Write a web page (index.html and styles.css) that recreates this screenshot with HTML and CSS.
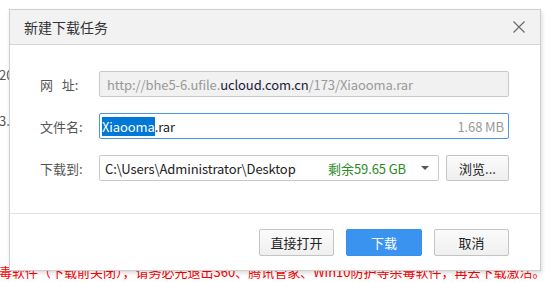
FILE: index.html
```html
<!DOCTYPE html>
<html lang="zh-CN">
<head>
  <meta charset="UTF-8">
  <title>新建下载任务</title>
  <link rel="stylesheet" href="styles.css">
</head>
<body>
  <div class="page">
    <p class="line line-a">2020年3月最新版本下载</p>
    <p class="line line-b">3.0.1 版本更新说明</p>
    <p class="line warn">毒软件（下载前关闭），请务必先退出360、腾讯管家、Win10防护等杀毒软件，再去下载激活。</p>
  </div>

  <div class="dialog">
    <div class="dialog-head">
      <span class="dialog-title">新建下载任务</span>
      <svg class="close" width="12" height="12" viewBox="0 0 12 12">
        <path d="M0.5 0.5 L11.5 11.5 M11.5 0.5 L0.5 11.5" stroke="#666" stroke-width="1.1" fill="none"/>
      </svg>
    </div>

    <div class="dialog-body">
      <div class="row">
        <label class="label">网&nbsp;&nbsp;&nbsp;址:</label>
        <div class="field field-disabled">
          <span class="dim">http://bhe5-6.ufile.</span><span class="host">ucloud.com.cn</span><span class="dim">/173/Xiaooma.rar</span>
        </div>
      </div>
      <div class="row">
        <label class="label">文件名:</label>
        <div class="field field-active">
          <span class="sel">Xiaooma</span><span>.rar</span>
          <span class="size">1.68 MB</span>
        </div>
      </div>
      <div class="row">
        <label class="label">下载到:</label>
        <div class="field field-select">
          <span>C:\Users\Administrator\Desktop</span>
          <span class="free">剩余59.65 GB</span>
          <span class="caret"></span>
        </div>
        <button class="btn btn-browse">浏览...</button>
      </div>
    </div>

    <div class="dialog-foot">
      <button class="btn">直接打开</button>
      <button class="btn btn-primary">下载</button>
      <button class="btn">取消</button>
    </div>
  </div>
</body>
</html>
```

FILE: styles.css
```css
body {
  margin: 0;
  font-family: "Noto Sans CJK SC", "Noto Sans", sans-serif;
  font-size: 13px;
  color: #333;
  background: #fff;
  overflow: hidden;
}
/* Page behind the dialog */
.page {
  padding-top: 66px;
}
.line {
  margin: 0;
  white-space: nowrap;
  margin-left: -1px;
  color: #555;
  font-size: 13px;
  line-height: 18px;
}
.line-b {
  margin-top: 28px;
}
.warn {
  margin-top: 133px;
  color: #f00;
}
/* Dialog box */
.dialog {
  position: absolute;
  left: 9px;
  top: 9px;
  width: 530px;
  height: 260px;
  background: #fff;
  border: 1px solid #cfcfcf;
  box-shadow: 1px 2px 4px rgba(0, 0, 0, 0.15);
  display: flex;
  flex-direction: column;
}
.dialog-head {
  height: 34px;
  background: #f2f2f3;
  border-bottom: 1px solid #d6d6d6;
  display: flex;
  align-items: center;
  justify-content: space-between;
  padding: 0 15px 0 14px;
}
.dialog-title {
  font-size: 14px;
  color: #333;
}
.dialog-body {
  padding: 26px 31px 0 30px;
  display: flex;
  flex-direction: column;
  gap: 16px;
  height: 142px;
  border-bottom: 1px solid #e2e2e2;
}
.row {
  display: flex;
  align-items: center;
  height: 26px;
}
.label {
  width: 59px;
  color: #555;
  flex-shrink: 0;
}
.field {
  flex: 1;
  height: 24px;
  border: 1px solid #c9c9c9;
  border-radius: 2px;
  display: flex;
  align-items: center;
  padding: 0 4px 0 5px;
  white-space: nowrap;
  color: #222;
  letter-spacing: -0.1px;
}
.field-disabled {
  background: #f1f1f1;
  padding-left: 7px;
}
.dim {
  color: #999;
}
.host {
  color: #1a1a3a;
}
.field-active {
  border-color: #4a97e6;
  padding-left: 2px;
}
.sel {
  background: #0078d7;
  color: #fff;
}
.size {
  margin-left: auto;
  color: #999;
}
.field-select {
  flex: 0 0 auto;
  width: 324px;
  padding-right: 9px;
}
.free {
  margin-left: auto;
  color: #2d8a1f;
}
.caret {
  margin-left: 15px;
  width: 0;
  height: 0;
  border-left: 4px solid transparent;
  border-right: 4px solid transparent;
  border-top: 4px solid #555;
}
/* Buttons */
.btn {
  font: inherit;
  color: #222;
  width: 75px;
  height: 27px;
  background: linear-gradient(#fbfbfb, #efefef);
  border: 1px solid #c4c4c4;
  border-radius: 2px;
  padding: 0;
}
.btn-browse {
  width: 68px;
  height: 26px;
  margin-left: 7px;
}
.btn-primary {
  width: 76px;
  color: #fff;
  background: #3a93ef;
  border-color: #3a8fe8;
}
.dialog-foot {
  display: flex;
  justify-content: flex-end;
  gap: 12px;
  padding: 15px 31px 0 0;
}
```
